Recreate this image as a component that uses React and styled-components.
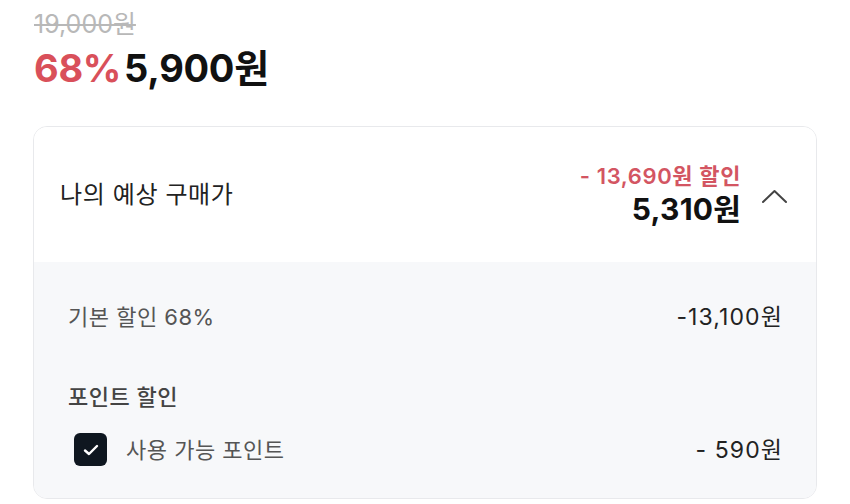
import React, { useState } from 'react';
import styled, { createGlobalStyle } from 'styled-components';

const GlobalStyle = createGlobalStyle`
  body {
    margin: 0;
    background: #fff;
    font-family: Inter, "Noto Sans CJK KR", sans-serif;
    color: #111;
  }
`;

const Page = styled.div`
  width: 850px;
  padding: 8px 33px 0;
  box-sizing: border-box;
`;

const PriceBlock = styled.div`
  display: flex;
  flex-direction: column;
  padding-left: 1px;
`;

const OriginalPrice = styled.span`
  font-size: 25px;
  line-height: 32px;
  color: #b8b8b8;
  text-decoration: line-through;
`;

const SaleRow = styled.div`
  display: flex;
  align-items: baseline;
  gap: 3px;
  margin-top: 4px;
  font-size: 38px;
  line-height: 48px;
  font-weight: 700;
  letter-spacing: -0.3px;
`;

const Rate = styled.span`
  color: #d9505a;
`;

const Card = styled.section`
  margin-top: 34px;
  width: 784px;
  border: 1px solid #e8e9ec;
  border-radius: 14px;
  overflow: hidden;
  box-sizing: border-box;
`;

const Header = styled.div`
  display: flex;
  align-items: center;
  height: 135px;
  padding: 0 28px 0 26px;
  background: #fff;
`;

const Title = styled.h3`
  flex: 1;
  margin: 0 0 5px;
  font-size: 24px;
  font-weight: 400;
  letter-spacing: 0.6px;
  color: #222;
`;

const Summary = styled.div`
  display: flex;
  flex-direction: column;
  align-items: flex-end;
  margin-right: 20px;
`;

const Discount = styled.span`
  font-size: 22px;
  line-height: 28px;
  font-weight: 600;
  letter-spacing: 0.6px;
  color: #d35562;
`;

const Final = styled.span`
  font-size: 30px;
  line-height: 38px;
  font-weight: 700;
  letter-spacing: 0.2px;
  color: #111;
`;

const Toggle = styled.button`
  display: flex;
  border: 0;
  padding: 0;
  background: none;
  cursor: pointer;
  margin-top: 2px;
`;

const Body = styled.div`
  background: #f7f8fa;
  padding: 40px 35px 32px 34px;
  display: flex;
  flex-direction: column;
`;

const Row = styled.div`
  display: flex;
  align-items: center;
  justify-content: space-between;
  min-height: 30px;
  margin-top: ${p => p.$gap || 0}px;
`;

const Label = styled.span`
  font-size: 22px;
  line-height: 30px;
  letter-spacing: 0.5px;
  color: ${p => (p.$strong ? '#444' : '#555')};
  font-weight: ${p => (p.$strong ? 500 : 400)};
`;

const Amount = styled.span`
  font-size: 23px;
  line-height: 30px;
  letter-spacing: 1.1px;
  margin-right: -2px;
  color: #222;
`;

const CheckLabel = styled.label`
  display: flex;
  align-items: center;
  gap: 19px;
  padding-left: 6px;
  cursor: pointer;
`;

const Box = styled.span`
  width: 33px;
  height: 33px;
  border-radius: 6px;
  background: ${p => (p.$on ? '#0f1720' : '#fff')};
  border: ${p => (p.$on ? '0' : '1px solid #ccc')};
  display: flex;
  align-items: center;
  justify-content: center;
  box-sizing: border-box;
`;

export default function App() {
  const [usePoint, setUsePoint] = useState(true);

  return (
    <Page>
      <GlobalStyle />
      <PriceBlock>
        <OriginalPrice>19,000원</OriginalPrice>
        <SaleRow>
          <Rate>68%</Rate>
          <span>5,900원</span>
        </SaleRow>
      </PriceBlock>

      <Card>
        <Header>
          <Title>나의 예상 구매가</Title>
          <Summary>
            <Discount>- 13,690원 할인</Discount>
            <Final>5,310원</Final>
          </Summary>
          <Toggle aria-label="접기">
            <svg width="27" height="16" viewBox="0 0 27 16" fill="none">
              <path d="M2 14 L13.5 3 L25 14" stroke="#444" strokeWidth="2" strokeLinecap="round" strokeLinejoin="round" />
            </svg>
          </Toggle>
        </Header>

        <Body>
          <Row>
            <Label>기본 할인 68%</Label>
            <Amount>-13,100원</Amount>
          </Row>
          <Row $gap={50}>
            <Label $strong>포인트 할인</Label>
          </Row>
          <Row $gap={21}>
            <CheckLabel onClick={() => setUsePoint(v => !v)}>
              <Box $on={usePoint}>
                {usePoint && (
                  <svg width="16" height="12" viewBox="0 0 16 12" fill="none">
                    <path d="M2 6.5 L6 10 L14 2" stroke="#fff" strokeWidth="2.4" strokeLinecap="round" strokeLinejoin="round" />
                  </svg>
                )}
              </Box>
              <Label>사용 가능 포인트</Label>
            </CheckLabel>
            <Amount>- 590원</Amount>
          </Row>
        </Body>
      </Card>
    </Page>
  );
}
